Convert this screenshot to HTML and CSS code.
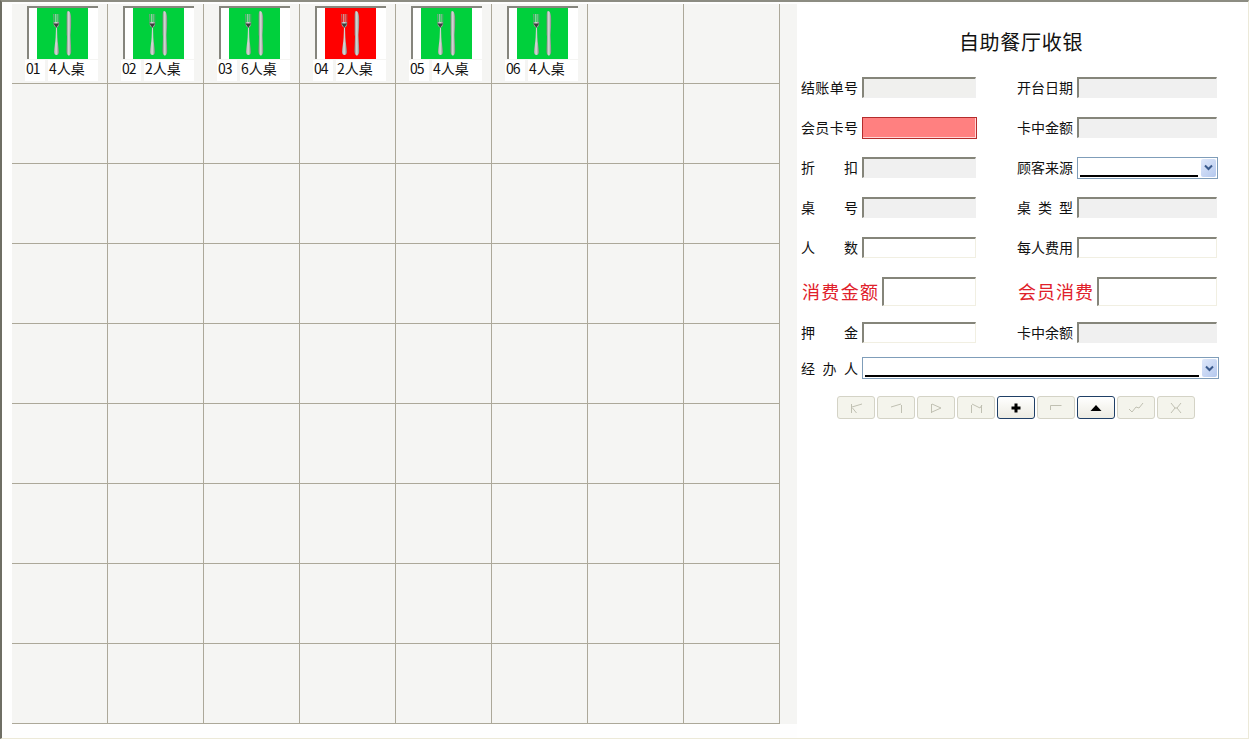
FILE: index.html
```html
<!DOCTYPE html>
<html lang="zh-CN">
<head>
  <meta charset="UTF-8" />
  <title>自助餐厅收银</title>
  <link rel="stylesheet" href="styles.css">
</head>
<body>
  <svg class="defs" width="0" height="0">
    <defs>
      <linearGradient id="silver" x1="0" y1="0" x2="1" y2="0">
        <stop offset="0" stop-color="#7d827e" />
        <stop offset="0.5" stop-color="#dcdfdc" />
        <stop offset="1" stop-color="#7f8480" />
      </linearGradient>
      <symbol id="cutlery" viewBox="0 0 51 51">
        <!-- 叉子 -->
        <path d="M16 6h.8v8h1V6h.9v8h1V6h.9v8h1V6h.6v10c0 2-1.300 3-2.200 3.500l.4 10c.2 5 1.500 11 1.500 14.500 0 2-1 3-2.400 3s-2.500-1-2.500-3c0-3.500 1.400-9.500 1.600-14.500l.4-10c-1-.5-2.500-1.500-2.500-3.500z" fill="url(#silver)" />
        <path d="M16.500 15.500h5.500l-2.700 4.500z" fill="#3c3f3c" />
        <!-- 餐刀 -->
        <path d="M31 3c2 0 3.200 3 3.200 9 0 6-.4 11-.7 15l.7 15c.2 3-.8 5.500-2.300 5.500s-2.700-2.500-2.500-5.500l.6-14-.4-1V8c0-3 .4-5 1.400-5z" fill="url(#silver)" />
      </symbol>
    </defs>
  </svg>

  <div class="window">
    <div class="desk">
      <div id="table-grid" class="table-grid">
        <!-- 自动生成 -->
      </div>
    </div>

    <div class="panel">
      <h1 class="panel-title">自助餐厅收银</h1>

      <div class="form-row">
        <div class="field">
          <label class="field-label">结账单号</label>
          <input class="text-box is-readonly is-bill" type="text" readonly>
        </div>
        <div class="field field-right">
          <label class="field-label">开台日期</label>
          <input class="text-box is-readonly" type="text" readonly>
        </div>
      </div>

      <div class="form-row">
        <div class="field">
          <label class="field-label">会员卡号</label>
          <input class="text-box is-alert" type="text">
        </div>
        <div class="field field-right">
          <label class="field-label">卡中金额</label>
          <input class="text-box is-readonly" type="text" readonly>
        </div>
      </div>

      <div class="form-row">
        <div class="field">
          <label class="field-label">折扣</label>
          <input class="text-box is-readonly" type="text" readonly>
        </div>
        <div class="field field-right">
          <label class="field-label">顾客来源</label>
          <div class="combo">
            <span class="combo-value"></span>
            <span class="combo-arrow">
              <svg width="9" height="7" viewBox="0 0 9 7"><path d="M1 1.500l3.500 3.500 3.500-3.500" fill="none" stroke="#3a5a8c" stroke-width="2" /></svg>
            </span>
          </div>
        </div>
      </div>

      <div class="form-row">
        <div class="field">
          <label class="field-label">桌号</label>
          <input class="text-box is-readonly" type="text" readonly>
        </div>
        <div class="field field-right">
          <label class="field-label">桌类型</label>
          <input class="text-box is-readonly" type="text" readonly>
        </div>
      </div>

      <div class="form-row">
        <div class="field">
          <label class="field-label">人数</label>
          <input class="text-box" type="text">
        </div>
        <div class="field field-right">
          <label class="field-label">每人费用</label>
          <input class="text-box" type="text">
        </div>
      </div>

      <div class="form-row row-money">
        <div class="field">
          <label class="field-label label-money">消费金额</label>
          <input class="text-box box-money" type="text">
        </div>
        <div class="field field-right">
          <label class="field-label label-money">会员消费</label>
          <input class="text-box box-money" type="text">
        </div>
      </div>

      <div class="form-row row-deposit">
        <div class="field">
          <label class="field-label">押金</label>
          <input class="text-box" type="text">
        </div>
        <div class="field field-right">
          <label class="field-label">卡中余额</label>
          <input class="text-box is-readonly" type="text" readonly>
        </div>
      </div>

      <div class="form-row row-operator">
        <div class="field field-wide">
          <label class="field-label">经办人</label>
          <div class="combo combo-wide">
            <span class="combo-value"></span>
            <span class="combo-arrow">
              <svg width="9" height="7" viewBox="0 0 9 7"><path d="M1 1.500l3.500 3.500 3.500-3.500" fill="none" stroke="#3a5a8c" stroke-width="2" /></svg>
            </span>
          </div>
        </div>
      </div>

      <div class="nav-bar">
        <button class="nav-button" type="button">
          <svg width="16" height="12" viewBox="0 0 16 12"><path d="M3.500 2v9M4 5l10-3M4.500 6l4 5" class="icon-off" /></svg>
        </button>
        <button class="nav-button" type="button">
          <svg width="16" height="12" viewBox="0 0 16 12"><path d="M3 5l10-3M13.500 3v8" class="icon-off" /></svg>
        </button>
        <button class="nav-button" type="button">
          <svg width="16" height="12" viewBox="0 0 16 12"><path d="M3.500 2v9M4 2l9 4-9 4" class="icon-off" /></svg>
        </button>
        <button class="nav-button" type="button">
          <svg width="16" height="12" viewBox="0 0 16 12"><path d="M3.500 3v8M4 2l8 4 2-3M13.500 3v8" class="icon-off" /></svg>
        </button>
        <button class="nav-button is-active" type="button">
          <svg width="16" height="12" viewBox="0 0 16 12"><path d="M6.500 1.500h3v3h3v3h-3v3h-3v-3h-3v-3h3z" fill="#000" /></svg>
        </button>
        <button class="nav-button" type="button">
          <svg width="16" height="12" viewBox="0 0 16 12"><path d="M2.500 8V3.500h11" class="icon-off" /></svg>
        </button>
        <button class="nav-button is-active" type="button">
          <svg width="16" height="12" viewBox="0 0 16 12"><path d="M8 3l5.500 6h-11z" fill="#000" /></svg>
        </button>
        <button class="nav-button" type="button">
          <svg width="16" height="12" viewBox="0 0 16 12"><path d="M1 7l3 3 4-5 3 1 4-5" class="icon-off" /></svg>
        </button>
        <button class="nav-button" type="button">
          <svg width="16" height="12" viewBox="0 0 16 12"><path d="M3 1l4 5-4 5M13 1L9 6l4 5M7 6h2" class="icon-off" /></svg>
        </button>
      </div>
    </div>
  </div>

  <script>
    const tables = [
      { no: "01", type: "4人桌", busy: false },
      { no: "02", type: "2人桌", busy: false },
      { no: "03", type: "6人桌", busy: false },
      { no: "04", type: "2人桌", busy: true },
      { no: "05", type: "4人桌", busy: false },
      { no: "06", type: "4人桌", busy: false }
    ];

    const grid = document.getElementById("table-grid");

    for (let i = 0; i < 72; i++) {
      const cell = document.createElement("div");
      cell.className = "table-cell";

      const table = tables[i];
      if (table) {
        const color = table.busy ? "is-busy" : "is-free";
        cell.innerHTML = `
          <div class="tile-picture">
            <svg class="tile-icon ${color}" width="51" height="51"><use href="#cutlery" /></svg>
          </div>
          <div class="tile-label">
            <span class="tile-no">${table.no}</span>
            <span class="tile-type">${table.type}</span>
          </div>`;
      }

      grid.appendChild(cell);
    }
  </script>
</body>
</html>
```

FILE: styles.css
```css
body {
  margin: 0;
  background-color: #fff;
  font-family: "Noto Sans CJK SC", "Liberation Sans", sans-serif;
  color: #111;
}

.defs {
  position: absolute;
}

.window {
  display: flex;
  width: 1249px;
  height: 739px;
  box-sizing: border-box;
  padding: 2px 0 0 10px;
  background-color: #fefefe;
  border-top: 2px solid #8c8c82;
  border-left: 2px solid #6e6e64;
  border-right: 1px solid #ece9d8;
  border-bottom: 1px solid #ece9d8;
}

.desk {
  width: 785px;
  height: 720px;
  flex-shrink: 0;
  background-color: #f5f5f3;
}

.table-grid {
  display: grid;
  grid-template-columns: repeat(8, 96px);
  grid-template-rows: repeat(9, 80px);
  width: 768px;
}

.table-cell {
  box-sizing: border-box;
  padding: 2px 0 0 13px;
  border-right: 1px solid #aca899;
  border-bottom: 1px solid #aca899;
}

.tile-picture {
  display: flex;
  justify-content: flex-start;
  box-sizing: border-box;
  width: 71px;
  height: 53px;
  margin-left: 2px;
  padding-left: 8px;
  background-color: #fff;
  border-top: 2px solid #85857d;
  border-left: 2px solid #85857d;
}

.tile-icon {
  display: block;
}

.is-free {
  background-color: #00d03c;
}

.is-busy {
  background-color: #ff0000;
}

.tile-label {
  display: flex;
  gap: 3px;
  height: 21px;
  margin-top: 1px;
  font-size: 14px;
  line-height: 17px;
}

.tile-no {
  width: 19px;
  padding-left: 1px;
  background-color: #fff;
  letter-spacing: -1px;
}

.tile-type {
  width: 49px;
  padding-left: 1px;
  background-color: #fff;
}

.panel {
  flex: 1;
  padding-left: 4px;
  background-color: #fff;
}

.panel-title {
  width: 450px;
  margin: 23px 0 21px -5px;
  text-align: center;
  font-size: 20px;
  font-weight: normal;
  line-height: 29px;
  letter-spacing: 0.7px;
}

.form-row {
  display: flex;
  gap: 41px;
  height: 21px;
  margin-bottom: 19px;
}

.field {
  display: flex;
  align-items: center;
  gap: 4px;
  width: 175px;
}

.field-right {
  width: 200px;
}

.field-wide {
  width: 418px;
}

.field-label {
  flex-shrink: 0;
  width: 57px;
  font-size: 14px;
  line-height: 21px;
  text-align: justify;
  text-align-last: justify;
}

.field-right .field-label {
  width: 56px;
}

.field .label-money {
  width: 77px;
  padding-left: 1px;
  box-sizing: border-box;
  font-size: 18px;
  color: #e0202a;
}

.field-right .label-money {
  width: 76px;
}

.text-box {
  flex: 1;
  min-width: 0;
  height: 21px;
  box-sizing: border-box;
  margin: 0;
  padding: 0 2px;
  background-color: #fff;
  border-style: solid;
  border-width: 2px 1px 1px 2px;
  border-color: #85857a #f1efe2 #f1efe2 #85857a;
  border-radius: 0;
  outline: none;
}

.box-money {
  height: 29px;
}

.is-readonly {
  background-color: #f0f0f0;
  border-right-color: #f0f0f0;
  border-bottom-color: #f0f0f0;
}

.is-bill {
  background-color: #f0f0ee;
}

.is-alert {
  height: 22px;
  margin: 1px -1px 0 0;
  background-color: #ff8080;
  border: 1px solid #b32c2c;
  box-shadow: inset -1px -1px 0 #ffd8d8;
}

.row-money {
  height: 29px;
  margin-bottom: 16px;
}

.row-deposit {
  margin-bottom: 14px;
}

.row-operator {
  height: 22px;
  margin-bottom: 17px;
}

.combo {
  display: flex;
  flex: 0 0 141px;
  align-items: stretch;
  gap: 3px;
  height: 22px;
  box-sizing: border-box;
  padding: 2px 1px 1px 2px;
  background-color: #fff;
  border: 1px solid #7f9db9;
}

.combo-wide {
  flex: 1;
}

.combo-value {
  flex: 1;
  border-bottom: 2px solid #000;
}

.combo-arrow {
  display: flex;
  align-items: center;
  justify-content: center;
  width: 15px;
  margin-top: -1px;
  background: linear-gradient(135deg, #dfe8fa, #b4c8ee);
  border-radius: 2px;
}

.nav-bar {
  display: flex;
  gap: 2px;
  padding-left: 36px;
}

.nav-button {
  display: flex;
  align-items: center;
  justify-content: center;
  width: 38px;
  height: 23px;
  box-sizing: border-box;
  padding: 0;
  background-color: #f4f4ec;
  border: 1px solid #d4d3c6;
  border-radius: 3px;
}

.nav-button.is-active {
  background: linear-gradient(#ffffff, #ecebe2);
  border: 1px solid #1f3f66;
}

.icon-off {
  fill: none;
  stroke: #c0c0b2;
  stroke-width: 1;
}
```
